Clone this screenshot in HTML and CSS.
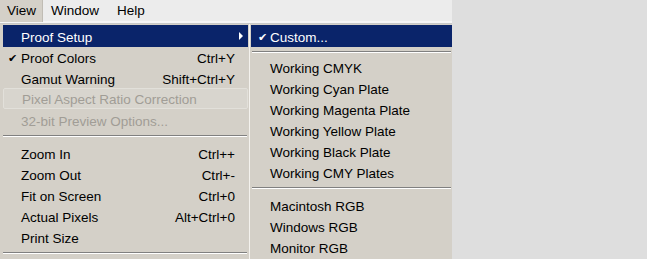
FILE: index.html
```html
<!DOCTYPE html>
<html lang="en">
<head>
    <meta charset="UTF-8">
    <title>View Menu</title>
    <link rel="stylesheet" href="styles.css">
</head>
<body>

<div class="app">
    <!-- Menu bar -->
    <div class="menubar">
        <span class="bar-item open">View</span>
        <span class="bar-item">Window</span>
        <span class="bar-item">Help</span>
    </div>

    <div class="menus">
        <!-- View menu -->
        <div class="menu main-menu">
            <div class="item selected">
                <span class="check"></span>
                <span class="label">Proof Setup</span>
                <span class="arrow"></span>
            </div>
            <div class="item">
                <span class="check">&#10004;</span>
                <span class="label">Proof Colors</span>
                <span class="key">Ctrl+Y</span>
            </div>
            <div class="item">
                <span class="check"></span>
                <span class="label">Gamut Warning</span>
                <span class="key">Shift+Ctrl+Y</span>
            </div>
            <div class="item disabled boxed">
                <span class="check"></span>
                <span class="label">Pixel Aspect Ratio Correction</span>
            </div>
            <div class="item disabled">
                <span class="check"></span>
                <span class="label">32-bit Preview Options...</span>
            </div>
            <div class="sep"></div>
            <div class="item">
                <span class="check"></span>
                <span class="label">Zoom In</span>
                <span class="key">Ctrl++</span>
            </div>
            <div class="item">
                <span class="check"></span>
                <span class="label">Zoom Out</span>
                <span class="key">Ctrl+-</span>
            </div>
            <div class="item">
                <span class="check"></span>
                <span class="label">Fit on Screen</span>
                <span class="key">Ctrl+0</span>
            </div>
            <div class="item">
                <span class="check"></span>
                <span class="label">Actual Pixels</span>
                <span class="key">Alt+Ctrl+0</span>
            </div>
            <div class="item">
                <span class="check"></span>
                <span class="label">Print Size</span>
            </div>
            <div class="sep"></div>
        </div>

        <!-- Proof Setup submenu -->
        <div class="menu sub-menu">
            <div class="item selected">
                <span class="check">&#10004;</span>
                <span class="label">Custom...</span>
            </div>
            <div class="sep short"></div>
            <div class="item"><span class="check"></span><span class="label">Working CMYK</span></div>
            <div class="item"><span class="check"></span><span class="label">Working Cyan Plate</span></div>
            <div class="item"><span class="check"></span><span class="label">Working Magenta Plate</span></div>
            <div class="item"><span class="check"></span><span class="label">Working Yellow Plate</span></div>
            <div class="item"><span class="check"></span><span class="label">Working Black Plate</span></div>
            <div class="item"><span class="check"></span><span class="label">Working CMY Plates</span></div>
            <div class="sep"></div>
            <div class="item"><span class="check"></span><span class="label">Macintosh RGB</span></div>
            <div class="item"><span class="check"></span><span class="label">Windows RGB</span></div>
            <div class="item"><span class="check"></span><span class="label">Monitor RGB</span></div>
        </div>
    </div>
</div>

</body>
</html>
```

FILE: styles.css
```css
/* Base */
* {
    margin: 0;
    padding: 0;
    box-sizing: border-box;
}

body {
    background: #dedede;
    font-family: "Liberation Sans", Arial, sans-serif;
    font-size: 13.5px;
    color: #000;
    overflow: hidden;
}

.app {
    width: 452px;
}

/* Menu bar */
.menubar {
    display: flex;
    height: 24px;
    background: #ececec;
    border-bottom: 1px solid #c8c8c8;
    box-shadow: inset 0 -2px 0 #f6f6f6;
}

.bar-item {
    height: 22px;
    line-height: 22px;
    padding: 0 8px;
}

.bar-item.open {
    padding: 0 6px 0 7px;
    background: #d4d0c8;
    border-right: 1px solid #c0bcb4;
}

.bar-item:nth-child(2) {
    padding-right: 10px;
}

/* Dropdown menus */
.menus {
    display: flex;
}

.menu {
    background: #d4d0c8;
    padding-top: 1px;
}

.main-menu {
    width: 250px;
    padding-left: 3px;
    padding-right: 1px;
    border-right: 1px solid #f4f2ee;
}

.sub-menu {
    width: 202px;
    padding-left: 1px;
}

.item {
    display: flex;
    align-items: center;
    height: 21px;
    padding-top: 3px;
    white-space: nowrap;
}

.item .check {
    width: 18px;
    text-align: center;
    font-size: 11px;
}

.sub-menu .item .check {
    width: 19px;
    padding-left: 3px;
}

.item .label {
    flex: 1;
}

.item .key {
    padding-right: 13px;
}

.item.selected {
    background: #0a246a;
    color: #fff;
    height: 22px;
    margin-bottom: -1px;
}

.item.disabled {
    color: #a19d96;
}

.item.boxed {
    background: #d8d5ce;
    border: 1px solid #e2e0da;
    border-radius: 2px;
    padding-top: 2px;
}

.arrow {
    width: 0;
    height: 0;
    margin-right: 5px;
    margin-bottom: 4px;
    border-top: 4px solid transparent;
    border-bottom: 4px solid transparent;
    border-left: 4px solid #fff;
}

/* Separators */
.sep {
    height: 12px;
    padding-top: 5px;
    margin-right: 1px;
}

.sep::after {
    content: "";
    display: block;
    border-top: 1px solid #808080;
    border-bottom: 1px solid #fff;
}

.sep.short {
    height: 10px;
    padding-top: 5px;
}

.sub-menu .sep {
    margin-left: 1px;
}
```
